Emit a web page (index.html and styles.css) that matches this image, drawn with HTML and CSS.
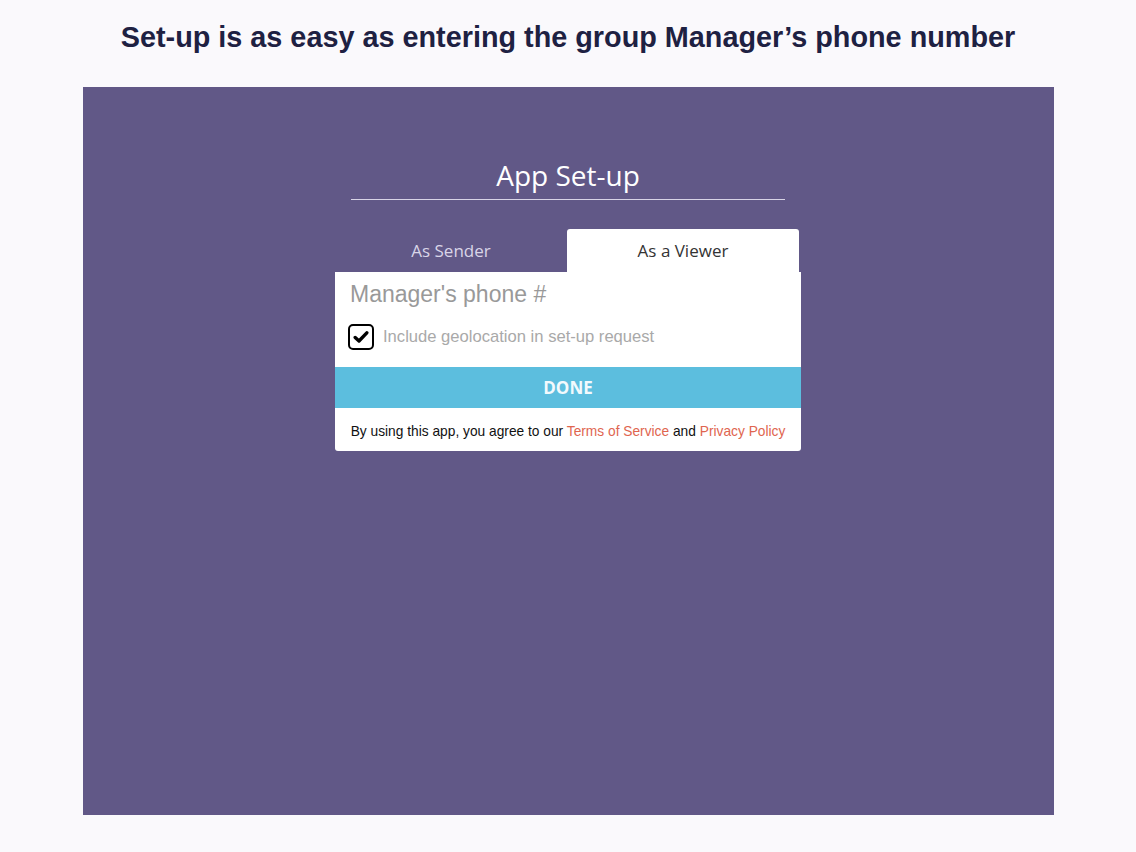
FILE: index.html
```html
<!DOCTYPE html>
<html>
<head>
    <link rel="stylesheet" href="styles.css">
</head>
<body>
    <h1 class="pageTitle">Set-up is as easy as entering the group Manager’s phone number</h1>
    <div class="appPanel">
        <div class="setupBox">
            <h2 class="setupTitle">App Set-up</h2>
            <div class="tabs">
                <div class="tab">As Sender</div>
                <div class="tab activeTab">As a Viewer</div>
            </div>
            <div class="card">
                <div class="phoneField">Manager's phone #</div>
                <label class="geoRow">
                    <span class="checkBox">
                        <svg width="16" height="14" viewBox="0 0 16 14">
                            <path d="M2.2 7.5 L6 11 L13.8 2.8" fill="none" stroke="#000" stroke-width="3.4" stroke-linecap="round" stroke-linejoin="round"/>
                        </svg>
                    </span>
                    Include geolocation in set-up request
                </label>
                <button class="doneButton">DONE</button>
                <div class="terms">By using this app, you agree to our <a href="#">Terms of Service</a> and <a href="#">Privacy Policy</a></div>
            </div>
        </div>
    </div>
</body>
</html>
```

FILE: styles.css
```css
body {
    margin: 0;
    background-color: #FAF9FC;
    font-family: 'Liberation Sans', Arial, sans-serif;
}
.pageTitle {
    margin: 0;
    padding-top: 21px;
    height: 87px;
    box-sizing: border-box;
    text-align: center;
    font-size: 28.8px;
    font-weight: bold;
    color: #1E2142;
}
.appPanel {
    margin-left: 83px;
    width: 971px;
    height: 728px;
    background-color: #615887;
    padding-top: 70px;
    box-sizing: border-box;
}
.setupBox {
    width: 466px;
    margin-left: 252px;
}
.setupTitle {
    margin: 0 16px;
    padding-bottom: 6px;
    border-bottom: 1px solid #D8D4E6;
    text-align: center;
    font-family: 'Open Sans', sans-serif;
    font-weight: normal;
    font-size: 28px;
    color: #FFFFFF;
    line-height: 36px;
}
.tabs {
    display: flex;
    margin-top: 29px;
    padding-right: 2px;
}
.tab {
    flex: 1;
    height: 43px;
    line-height: 44px;
    text-align: center;
    font-family: 'Open Sans', sans-serif;
    font-size: 17px;
    color: #D9D5E8;
}
.activeTab {
    background-color: #FFFFFF;
    color: #333333;
    border-radius: 3px 3px 0 0;
}
.card {
    background-color: #FFFFFF;
    border-radius: 0 0 3px 3px;
}
.phoneField {
    padding: 9px 15px 0;
    font-size: 23px;
    line-height: 26px;
    color: #999999;
    height: 34px;
}
.geoRow {
    display: flex;
    align-items: center;
    gap: 9px;
    padding: 7px 13px 1px;
    height: 30px;
    font-size: 16.6px;
    color: #A9A9A9;
}
.checkBox {
    width: 22px;
    height: 22px;
    border: 2.5px solid #000000;
    border-radius: 5px;
    display: flex;
    align-items: center;
    justify-content: center;
}
.doneButton {
    display: block;
    width: 100%;
    margin-top: 14px;
    height: 41px;
    border: none;
    background-color: #5CBEDE;
    color: #F2FAFD;
    font-family: 'Open Sans', sans-serif;
    font-weight: bold;
    font-size: 17px;
}
.terms {
    padding: 16px 0 12px;
    text-align: center;
    font-size: 13.75px;
    color: #111111;
}
.terms a {
    color: #E0654F;
    text-decoration: none;
}
```
